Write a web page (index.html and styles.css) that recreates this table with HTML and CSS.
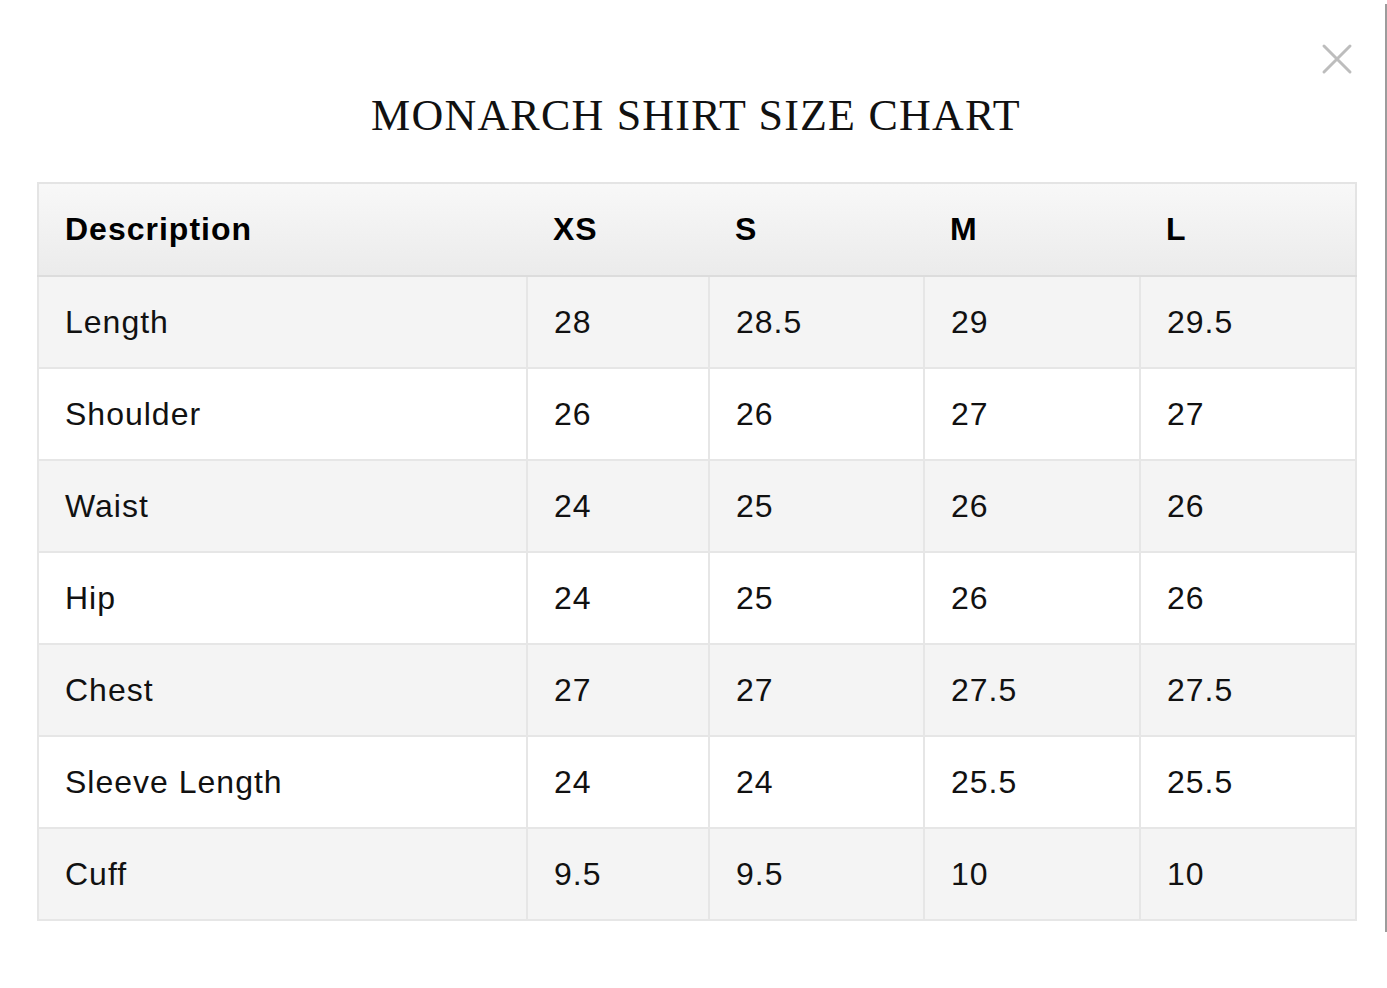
FILE: index.html
```html
<!DOCTYPE html>
<html lang="en">
<head>
<meta charset="utf-8">
<title>Monarch Shirt Size Chart</title>
<link rel="stylesheet" href="styles.css">
</head>
<body>
<div class="modal">
  <button class="close" aria-label="Close">
    <svg width="34" height="34" viewBox="0 0 34 34"><path d="M4 4 L30 30 M30 4 L4 30" stroke="#bdbdbd" stroke-width="3" stroke-linecap="round" fill="none"/></svg>
  </button>
  <h1 class="title">MONARCH SHIRT SIZE CHART</h1>
  <table class="chart">
    <colgroup>
      <col class="c-desc"><col class="c-xs"><col class="c-s"><col class="c-m"><col class="c-l">
    </colgroup>
    <thead>
      <tr><th>Description</th><th>XS</th><th>S</th><th>M</th><th>L</th></tr>
    </thead>
    <tbody>
      <tr><td>Length</td><td>28</td><td>28.5</td><td>29</td><td>29.5</td></tr>
      <tr><td>Shoulder</td><td>26</td><td>26</td><td>27</td><td>27</td></tr>
      <tr><td>Waist</td><td>24</td><td>25</td><td>26</td><td>26</td></tr>
      <tr><td>Hip</td><td>24</td><td>25</td><td>26</td><td>26</td></tr>
      <tr><td>Chest</td><td>27</td><td>27</td><td>27.5</td><td>27.5</td></tr>
      <tr><td>Sleeve Length</td><td>24</td><td>24</td><td>25.5</td><td>25.5</td></tr>
      <tr><td>Cuff</td><td>9.5</td><td>9.5</td><td>10</td><td>10</td></tr>
    </tbody>
  </table>
  <div class="scrollbar"></div>
</div>
</body>
</html>
```
FILE: styles.css
```css
html, body {
  margin: 0;
  padding: 0;
  background: #ffffff;
}

.modal {
  position: relative;
  width: 1387px;
  height: 988px;
  padding: 91px 0 0 37px;
  box-sizing: border-box;
}

.close {
  position: absolute;
  left: 1320px;
  top: 42px;
  width: 34px;
  height: 34px;
  padding: 0;
  border: 0;
  background: transparent;
}

.close svg {
  display: block;
}

.scrollbar {
  position: absolute;
  left: 1385px;
  top: 4px;
  width: 2px;
  height: 928px;
  background: #9c9c9c;
}

.title {
  margin: 0 0 41px 0;
  width: 1318px;
  text-align: center;
  font-family: "Liberation Serif", "Times New Roman", serif;
  font-weight: normal;
  font-size: 44px;
  line-height: 50px;
  letter-spacing: 1.2px;
  color: #111;
}

.chart {
  width: 1318px;
  table-layout: fixed;
  border-collapse: collapse;
  border: 2px solid #e4e4e4;
  font-family: "Liberation Sans", Arial, sans-serif;
  font-size: 32px;
  letter-spacing: 1px;
  color: #111;
}

.c-desc { width: 489px; }
.c-xs { width: 182px; }
.c-s { width: 215px; }
.c-m { width: 216px; }
.c-l { width: 216px; }

.chart th {
  height: 91px;
  padding: 0 0 0 26px;
  text-align: left;
  font-weight: bold;
  color: #000;
  background: linear-gradient(#f8f8f8, #ebebeb);
  border-bottom: 2px solid #dcdcdc;
  vertical-align: middle;
}

.chart td {
  height: 90px;
  padding: 0 0 0 26px;
  text-align: left;
  vertical-align: middle;
  border: 2px solid #e6e6e6;
}

.chart tbody tr:nth-child(odd) td {
  background: #f4f4f4;
}

.chart tbody tr:nth-child(even) td {
  background: #ffffff;
}
```
